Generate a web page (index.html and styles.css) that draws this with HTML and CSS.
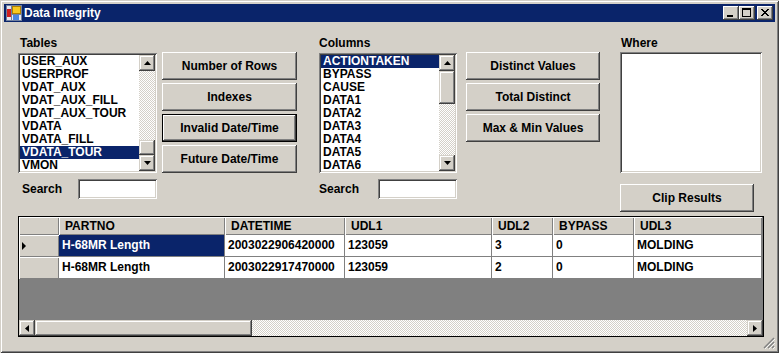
FILE: index.html
```html
<!DOCTYPE html>
<html lang="en">
<head>
  <meta charset="UTF-8">
  <title>Data Integrity</title>
  <link rel="stylesheet" href="styles.css">
</head>
<body>
  <div class="window">
    <div class="titlebar">
      <svg class="app-icon" width="16" height="16" viewBox="0 0 16 16">
        <rect x="0.5" y="0.5" width="15" height="15" fill="#e8e8f0" stroke="#7080a0"/>
        <line x1="5.5" y1="1" x2="5.5" y2="15" stroke="#7080a0"/>
        <line x1="1" y1="9.5" x2="15" y2="9.5" stroke="#7080a0"/>
        <rect x="1" y="4" width="4" height="8" fill="#d02020"/>
        <rect x="6.5" y="1.5" width="8" height="7" fill="#f8c820" stroke="#b08000"/>
        <rect x="7" y="10" width="6" height="5" fill="#4a86e0"/>
      </svg>
      <span class="title">Data Integrity</span>
      <div class="caption-buttons">
        <div class="cap-btn">
          <svg width="16" height="14" viewBox="0 0 16 14"><rect x="4" y="9" width="6" height="2" fill="#000"/></svg>
        </div>
        <div class="cap-btn">
          <svg width="16" height="14" viewBox="0 0 16 14"><path d="M3 2h9v9H3z M4 4v6h7V4z" fill="#000" fill-rule="evenodd"/></svg>
        </div>
        <div class="cap-btn cap-close">
          <svg width="16" height="14" viewBox="0 0 16 14"><path d="M4 3l7 7M5 3l7 7M11 3l-7 7M12 3l-7 7" stroke="#000" stroke-width="1" fill="none"/></svg>
        </div>
      </div>
    </div>

    <div class="client">
      <div class="top">
        <!-- tables -->
        <div class="col col-tables">
          <div class="label label-tables">Tables</div>
          <div class="listbox">
            <ul class="items">
              <li>USER_AUX</li>
              <li>USERPROF</li>
              <li>VDAT_AUX</li>
              <li>VDAT_AUX_FILL</li>
              <li>VDAT_AUX_TOUR</li>
              <li>VDATA</li>
              <li>VDATA_FILL</li>
              <li class="selected">VDATA_TOUR</li>
              <li>VMON</li>
            </ul>
            <div class="vscroll">
              <div class="sb-btn"><svg width="7" height="4" viewBox="0 0 7 4"><path d="M3.5 0L7 4H0z" fill="#000"/></svg></div>
              <div class="sb-track hatch"></div>
              <div class="sb-thumb thumb-bottom"></div>
              <div class="sb-btn"><svg width="7" height="4" viewBox="0 0 7 4"><path d="M0 0h7L3.5 4z" fill="#000"/></svg></div>
            </div>
          </div>
          <div class="search-row search-tables">
            <span class="label">Search</span>
            <div class="field search-field"></div>
          </div>
        </div>

        <div class="col col-buttons">
          <div class="btn">Number of Rows</div>
          <div class="btn">Indexes</div>
          <div class="btn btn-default">Invalid Date/Time</div>
          <div class="btn">Future Date/Time</div>
        </div>

        <!-- columns -->
        <div class="col col-columns">
          <div class="label">Columns</div>
          <div class="listbox">
            <ul class="items">
              <li class="selected">ACTIONTAKEN</li>
              <li>BYPASS</li>
              <li>CAUSE</li>
              <li>DATA1</li>
              <li>DATA2</li>
              <li>DATA3</li>
              <li>DATA4</li>
              <li>DATA5</li>
              <li>DATA6</li>
            </ul>
            <div class="vscroll">
              <div class="sb-btn"><svg width="7" height="4" viewBox="0 0 7 4"><path d="M3.5 0L7 4H0z" fill="#000"/></svg></div>
              <div class="sb-thumb thumb-top"></div>
              <div class="sb-track hatch"></div>
              <div class="sb-btn"><svg width="7" height="4" viewBox="0 0 7 4"><path d="M0 0h7L3.5 4z" fill="#000"/></svg></div>
            </div>
          </div>
          <div class="search-row">
            <span class="label">Search</span>
            <div class="field search-field"></div>
          </div>
        </div>

        <div class="col col-buttons2">
          <div class="btn">Distinct Values</div>
          <div class="btn">Total Distinct</div>
          <div class="btn">Max &amp; Min Values</div>
        </div>

        <div class="col col-where">
          <div class="label label-where">Where</div>
          <div class="field where-field"></div>
          <div class="btn clip-btn">Clip Results</div>
        </div>
      </div>

      <div class="datagrid">
        <div class="dg-table">
          <div class="hd"></div>
          <div class="hd">PARTNO</div>
          <div class="hd">DATETIME</div>
          <div class="hd">UDL1</div>
          <div class="hd">UDL2</div>
          <div class="hd">BYPASS</div>
          <div class="hd">UDL3</div>

          <div class="rh"><svg width="4" height="8" viewBox="0 0 4 8"><path d="M0 0l4 4-4 4z" fill="#000"/></svg></div>
          <div class="cell cell-selected">H-68MR Length</div>
          <div class="cell">2003022906420000</div>
          <div class="cell">123059</div>
          <div class="cell">3</div>
          <div class="cell">0</div>
          <div class="cell">MOLDING</div>

          <div class="rh"></div>
          <div class="cell">H-68MR Length</div>
          <div class="cell">2003022917470000</div>
          <div class="cell">123059</div>
          <div class="cell">2</div>
          <div class="cell">0</div>
          <div class="cell">MOLDING</div>
        </div>
        <div class="dg-empty"></div>
        <div class="hscroll">
          <div class="sb-btn"><svg width="4" height="7" viewBox="0 0 4 7"><path d="M4 0v7L0 3.5z" fill="#000"/></svg></div>
          <div class="sb-thumb hthumb"></div>
          <div class="sb-track hatch"></div>
          <div class="sb-btn"><svg width="4" height="7" viewBox="0 0 4 7"><path d="M0 0l4 3.5L0 7z" fill="#000"/></svg></div>
        </div>
      </div>
    </div>

    <svg class="grip" width="12" height="12" viewBox="0 0 12 12">
      <path d="M11 1L1 11M11 5L5 11M11 9L9 11" stroke="#808080" stroke-width="1.4"/>
      <path d="M12 2L2 12M12 6L6 12M12 10L10 12" stroke="#fff" stroke-width="0.8"/>
    </svg>
  </div>
</body>
</html>
```

FILE: styles.css
```css
body {
  margin: 0;
  background: #d4d0c8;
  font-family: "Liberation Sans", Arial, sans-serif;
  font-weight: bold;
  font-size: 12px;
  color: #000;
}

.window {
  position: relative;
  width: 779px;
  height: 353px;
  box-sizing: border-box;
  padding: 4px;
  background: #d4d0c8;
  box-shadow: inset 1px 1px #d4d0c8, inset -1px -1px #404040,
              inset 2px 2px #fff, inset -2px -2px #808080;
  display: flex;
  flex-direction: column;
}

/* title bar */
.titlebar {
  height: 18px;
  background: #0a246a;
  color: #fff;
  display: flex;
  align-items: center;
  padding: 0 2px;
}

.app-icon {
  display: block;
  margin-right: 2px;
}

.title {
  font-size: 12px;
  line-height: 18px;
}

.caption-buttons {
  margin-left: auto;
  display: flex;
}

.cap-btn {
  width: 16px;
  height: 14px;
  background: #d4d0c8;
  box-shadow: inset -1px -1px #404040, inset 1px 1px #fff,
              inset -2px -2px #808080, inset 2px 2px #d4d0c8;
}

.cap-btn svg {
  display: block;
}

.cap-close {
  margin-left: 2px;
}

/* client area */
.client {
  flex: 1;
  padding: 15px 0 0 14px;
}

.top {
  display: flex;
  align-items: flex-start;
}

.col {
  display: flex;
  flex-direction: column;
}

.col-tables {
  width: 139px;
}

.col-buttons {
  width: 135px;
  margin-left: 5px;
  padding-top: 15px;
  gap: 3px;
}

.col-columns {
  width: 138px;
  margin-left: 22px;
}

.col-buttons2 {
  width: 134px;
  margin-left: 9px;
  padding-top: 15px;
  gap: 3px;
}

.col-where {
  width: 142px;
  margin-left: 20px;
}

.label {
  height: 13px;
  line-height: 13px;
}

.label-tables {
  padding-left: 2px;
}

.label-where {
  padding-left: 1px;
}

/* sunken controls */
.listbox,
.field {
  box-sizing: border-box;
  background: #fff;
  box-shadow: inset 1px 1px #808080, inset -1px -1px #fff,
              inset 2px 2px #404040, inset -2px -2px #d4d0c8;
}

.listbox {
  margin-top: 3px;
  height: 120px;
  padding: 2px;
  display: flex;
}

.items {
  flex: 1;
  list-style: none;
  margin: 0;
  padding: 0;
  overflow: hidden;
}

.items li {
  height: 13px;
  line-height: 13px;
  padding-left: 2px;
  white-space: nowrap;
}

.items li.selected {
  background: #0a246a;
  color: #fff;
}

/* scrollbars */
.vscroll {
  width: 16px;
  display: flex;
  flex-direction: column;
}

.hscroll {
  height: 16px;
  display: flex;
}

.sb-btn,
.sb-thumb {
  flex: none;
  box-sizing: border-box;
  background: #d4d0c8;
  box-shadow: inset -1px -1px #404040, inset 1px 1px #d4d0c8,
              inset -2px -2px #808080, inset 2px 2px #fff;
}

.sb-btn {
  width: 16px;
  height: 16px;
  display: flex;
  align-items: center;
  justify-content: center;
}

.sb-track {
  flex: 1;
}

.hatch {
  background: repeating-conic-gradient(#fff 0 25%, #d4d0c8 0 50%) 0 0 / 2px 2px;
}

.thumb-bottom {
  height: 15px;
}

.thumb-top {
  height: 33px;
}

.hthumb {
  width: 217px;
}

/* search rows */
.search-row {
  margin-top: 6px;
  display: flex;
  align-items: center;
}

.search-tables .label {
  padding-left: 4px;
}

.search-field {
  margin-left: auto;
  width: 79px;
  height: 20px;
}

.where-field {
  margin-top: 2px;
  height: 121px;
}

/* buttons */
.btn {
  box-sizing: border-box;
  height: 28px;
  display: flex;
  align-items: center;
  justify-content: center;
  background: #d4d0c8;
  box-shadow: inset -1px -1px #404040, inset 1px 1px #fff,
              inset -2px -2px #808080, inset 2px 2px #d4d0c8;
  white-space: nowrap;
}

.btn-default {
  border: 1px solid #000;
}

.clip-btn {
  margin-top: 11px;
  width: 134px;
}

/* data grid */
.datagrid {
  margin-top: 4px;
  width: 746px;
  height: 121px;
  box-sizing: border-box;
  border: 1px solid #000;
  background: #808080;
  display: flex;
  flex-direction: column;
}

.dg-table {
  display: grid;
  grid-template-columns: 40px 166px 120px 147px 61px 81px 128px;
  grid-template-rows: 18px 22px 22px;
}

.hd,
.rh {
  box-sizing: border-box;
  background: #d4d0c8;
  box-shadow: inset 1px 1px #fff, inset -1px -1px #808080;
  white-space: nowrap;
}

.hd {
  line-height: 18px;
  padding-left: 6px;
}

.rh {
  display: flex;
  align-items: center;
  padding-left: 3px;
}

.cell {
  box-sizing: border-box;
  background: #fff;
  border-right: 1px solid #808080;
  border-bottom: 1px solid #808080;
  line-height: 21px;
  padding-left: 3px;
  white-space: nowrap;
}

.cell-selected {
  background: #0a246a;
  color: #fff;
}

.dg-empty {
  flex: 1;
}

.grip {
  position: absolute;
  right: 4px;
  bottom: 4px;
}
```
